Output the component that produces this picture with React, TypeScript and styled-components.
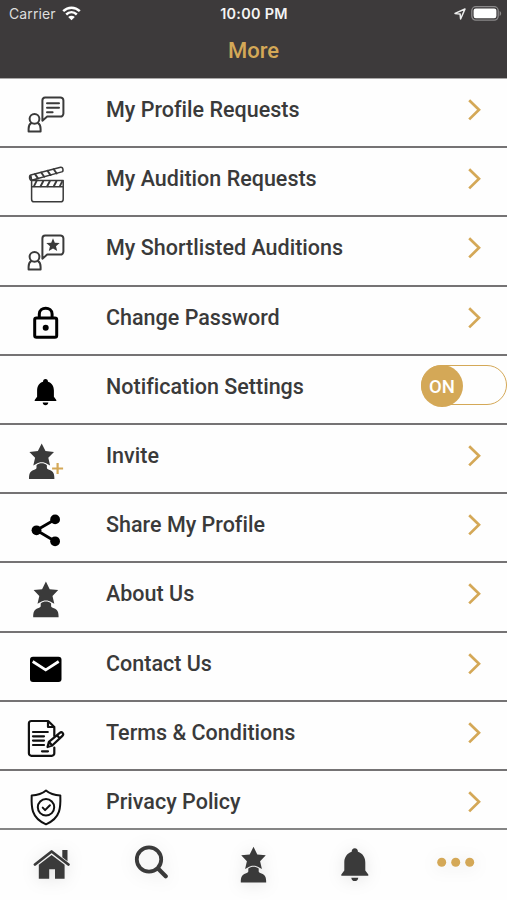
import React from "react";
import styled, { createGlobalStyle } from "styled-components";

const ink = "#3a3a3a";
const gold = "#d4a857";

const GlobalStyle = createGlobalStyle`
  * { box-sizing: border-box; }
  body { margin: 0; background: #fefefe; font-family: Roboto, sans-serif; }
`;

const Screen = styled.div`
  width: 507px;
  height: 900px;
  display: flex;
  flex-direction: column;
  overflow: hidden;
  background: #fefefe;
`;

const Header = styled.header`
  height: 79px;
  flex: none;
  background: #3d3a3b;
  border-bottom: 1px solid #aaa8a8;
`;

const StatusBar = styled.div`
  height: 28px;
  display: grid;
  grid-template-columns: 1fr auto 1fr;
  align-items: center;
  padding: 0 6px 1px 9px;
  color: #f4f4f4;
  font-family: Inter, sans-serif;
  font-size: 14px;
  line-height: 27px;
`;

const Carrier = styled.div`
  display: flex;
  align-items: center;
  gap: 6px;
  color: #dededd;
  letter-spacing: 0.1px;
`;

const Clock = styled.div`
  font-weight: 600;
  font-size: 14.4px;
  letter-spacing: 0.3px;
  margin-right: 2px;
`;

const Indicators = styled.div`
  display: flex;
  align-items: center;
  justify-content: flex-end;
  gap: 5px;
  margin-right: -1px;
`;

const Title = styled.h1`
  margin: 0;
  height: 44px;
  text-align: center;
  color: ${gold};
  font-size: 22px;
  font-weight: 500;
  line-height: 45px;
`;

const List = styled.main`
  flex: 1;
  min-height: 0;
  overflow: hidden;
`;

const Row = styled.div`
  height: 69.2px;
  display: flex;
  border-bottom: 2px solid #757374;
`;

const IconCell = styled.svg`
  width: 80px;
  height: 66px;
  flex: none;
  fill: none;
  stroke-linecap: round;
  stroke-linejoin: round;
`;

const Label = styled.div`
  flex: 1;
  padding-left: 26px;
  color: ${ink};
  font-size: 21.5px;
  font-weight: 500;
  line-height: 61px;
  letter-spacing: 0.01px;
  font-variant-ligatures: none;
  white-space: nowrap;
`;

const Chevron = styled.svg`
  width: 16px;
  height: 24px;
  margin: 19px 25px 0 0;
  flex: none;
  fill: none;
  stroke: ${gold};
  stroke-width: 2.7;
`;

const Toggle = styled.div`
  width: 86px;
  height: 40px;
  margin: 9px 0 0;
  flex: none;
  border: 1.5px solid ${gold};
  border-radius: 20px;
`;

const Knob = styled.div`
  width: 42px;
  height: 42px;
  margin: -1px 0 0 -1px;
  border-radius: 50%;
  background: ${gold};
  color: #fff;
  font-size: 18.5px;
  font-weight: 500;
  line-height: 44px;
  text-align: center;
`;

const TabBar = styled.nav`
  height: 72px;
  flex: none;
  display: grid;
  grid-template-columns: repeat(5, 1fr);
  justify-items: center;
  border-top: 2px solid #858585;
  background: #fefefe;
`;

const TabIcon = styled.svg`
  width: 60px;
  height: 66px;
  fill: none;
  overflow: visible;
  filter: drop-shadow(0 2px 8px rgba(0, 0, 0, 0.1));
`;

const Person = () => (
  <g stroke={ink} strokeWidth="2">
    <circle cx="34.5" cy="39.8" r="4.9" />
    <path d="M31.2 44.2c-2 1.2-2.6 3.3-2.6 5.8v2.4h12V50c0-2.5-.6-4.6-2.6-5.8" />
    <path d="M45.2 18.4h15.2a3 3 0 0 1 3 3v13.2a3 3 0 0 1-3 3H47.2l-4.8 4.1V21.4a3 3 0 0 1 2.8-3z" />
  </g>
);

const starPath = "M0 -12.4 3.8 -4.8 12.3 -3.9 6.6 2 8.4 9.8 5.6 8.2 C2.5 6 -2.5 6 -5.6 8.2L-8.4 9.8 -6.6 2 -12.3 -3.9 -3.8 -4.8Z";
const bustPath = "M0 7.5c1.9 0 3.7.6 5.2 1.9v2.6c0 1 .9 1.6 2.8 2.3 3.6 1.3 4.7 3.4 4.7 9H-12.7c0-5.6 1.1-7.7 4.7-9 1.9-.7 2.8-1.3 2.8-2.3V9.4C-3.7 8.1-1.9 7.5 0 7.5z";
const bellPath = "M0 -13c-1.6 0-2.5 1.1-2.5 2.8C-6.5-9-8.4-5.5-8.4-1.4v6.2L-10.8 8v1h21.6V8L8.4 4.8v-6.2c0-4.1-1.9-7.6-5.9-8.8C2.5-11.9 1.6-13 0-13zM-2.8 10.5h5.6c-.2 1.7-1.2 2.7-2.8 2.7s-2.6-1-2.8-2.7z";

const StarPerson = () => (
  <g fill={ink}>
    <path d={starPath} />
    <path d={bustPath} />
  </g>
);

const icons: Record<string, React.ReactNode> = {
  profile: (
    <>
      <Person />
      <path stroke={ink} strokeWidth="2" d="M47 24.2h12M47 28.7h12M47 33.2h5.6" />
    </>
  ),
  audition: (
    <g stroke={ink} strokeWidth="1.5" transform="translate(0 -0.2)">
      <path d="M30.8 27.2 60.6 19.5c2.4-.6 3.4 3.9 1.1 4.6L31.6 32.4zM30.8 27.2c-2.1.7-1.3 5.6.8 5.2v19c0 1.6.9 2.6 2.5 2.6h26.5c1.6 0 2.6-1 2.6-2.6V32.7H31.5M31.5 39h31.7" />
      <path strokeWidth="1.9" d="m35 26.3 3 4.3M41.2 24.7l3 4.2M47.5 23l3 4.3M53.7 21.4l3 4.3M36.5 33.4l-2.5 5M43.2 33.4l-2.6 5M49.8 33.4l-2.6 5M56.4 33.4l-2.6 5M62 34l-2 4" />
    </g>
  ),
  shortlist: (
    <>
      <Person />
      <path fill={ink} transform="translate(53 28)" d="m0-6.8 1.8 4.5 4.9.3L3 1.2l1.2 4.9L0 3.5l-4.2 2.6L-3 1.2-6.7-2l4.9-.3z" />
    </>
  ),
  lock: (
    <>
      <rect x="34.7" y="31" width="22" height="19.2" rx="1.8" stroke="#000" strokeWidth="3" />
      <path stroke="#000" strokeWidth="3" d="M39.3 30.5v-3.4c0-7.7 12.8-7.7 12.8 0v3.4" />
      <circle cx="45.7" cy="40.8" r="3" fill="#000" />
    </>
  ),
  bell: <path fill="#000" transform="translate(45.5 36)" d={bellPath} />,
  invite: (
    <>
      <g transform="translate(41.7 30.8)"><StarPerson /></g>
      <path stroke={gold} strokeWidth="2.2" strokeLinecap="butt" d="M57.6 38v11M52.1 43.5h11" />
    </>
  ),
  share: (
    <>
      <path stroke="#000" strokeWidth="2.8" d="m55 25.5-18.5 10.8L55 47.3" />
      <g fill="#000"><circle cx="55.1" cy="25.4" r="4.9" /><circle cx="36.5" cy="36.3" r="4.9" /><circle cx="55.1" cy="47.3" r="4.9" /></g>
    </>
  ),
  about: <g transform="translate(45.9 31)"><StarPerson /></g>,
  mail: (
    <>
      <rect x="30" y="23.7" width="31.5" height="25.2" rx="3" fill="#000" />
      <path stroke="#fff" strokeWidth="2.7" strokeLinecap="butt" strokeLinejoin="miter" d="m32.7 28.5 13 8.3 13-8.3" />
    </>
  ),
  terms: (
    <g stroke="#111" strokeWidth="2.2">
      <path d="M54.3 45.5v5.8a2.5 2.5 0 0 1-2.5 2.5H31.4a2.5 2.5 0 0 1-2.5-2.5V21.5a2.5 2.5 0 0 1 2.5-2.5h16.8l6.1 6v9M48 19.3V25h6" />
      <path d="M33 30h14.8M33 34.3h11M33 38.6h11M33 43h11M42 49.3h6" />
      <path d="m47.5 45 1.4-5.2 10.9-9c2.1-1.7 4.6 1.2 2.6 3.1l-10.2 9.6zM57 33.2l2.7 3.1M48.9 39.8l3.3 3.7" />
    </g>
  ),
  privacy: (
    <g stroke="#111" strokeWidth="2">
      <path d="M46 19.5c4 3.4 8.8 4.7 14.3 4.9.4 11 .9 22.6-14.3 28.9-15.2-6.3-14.7-17.9-14.3-28.9 5.5-.2 10.3-1.5 14.3-4.9z" />
      <circle cx="46" cy="36.3" r="8.2" />
      <path d="m42.7 36.6 2.4 2.5 4.8-4.9" />
    </g>
  ),
};

const rows: { icon: string; text: string; toggle?: boolean }[] = [
  { icon: "profile", text: "My Profile Requests" },
  { icon: "audition", text: "My Audition Requests" },
  { icon: "shortlist", text: "My Shortlisted Auditions" },
  { icon: "lock", text: "Change Password" },
  { icon: "bell", text: "Notification Settings", toggle: true },
  { icon: "invite", text: "Invite" },
  { icon: "share", text: "Share My Profile" },
  { icon: "about", text: "About Us" },
  { icon: "mail", text: "Contact Us" },
  { icon: "terms", text: "Terms & Conditions" },
  { icon: "privacy", text: "Privacy Policy" },
];

export default function App() {
  return (
    <Screen>
      <GlobalStyle />
      <Header>
        <StatusBar>
          <Carrier>
            Carrier
            <svg width="19" height="15" viewBox="0 0 19 15" fill="none" stroke="#fff" strokeWidth="2.5">
              <path d="M1.2 5.2c4.8-4.6 11.8-4.6 16.6 0M4.2 8.5c3.1-2.9 7.5-2.9 10.6 0" />
              <path fill="#fff" stroke="none" d="M6.2 10.9c1.9-1.7 4.7-1.7 6.6 0L9.5 14.2z" />
            </svg>
          </Carrier>
          <Clock>10:00 PM</Clock>
          <Indicators>
            <svg width="12" height="12" viewBox="0 0 12 12" fill="none" stroke="#eee" strokeWidth="1.5" strokeLinejoin="round">
              <path d="M1 5.4 11 1 6.6 11 6.1 5.9z" />
            </svg>
            <svg width="31" height="15" viewBox="0 0 31 15">
              <rect x=".8" y=".7" width="26.4" height="13.4" rx="4" fill="none" stroke="#8b898a" strokeWidth="1.3" />
              <rect x="2.6" y="2.5" width="22.8" height="9.8" rx="2.2" fill="#fff" />
              <path d="M28.6 5c2 .7 2 4.3 0 5z" fill="#8b898a" />
            </svg>
          </Indicators>
        </StatusBar>
        <Title>More</Title>
      </Header>
      <List>
        {rows.map((row) => (
          <Row key={row.icon}>
            <IconCell viewBox="0 0 80 66">{icons[row.icon]}</IconCell>
            <Label>{row.text}</Label>
            {row.toggle ? (
              <Toggle><Knob>ON</Knob></Toggle>
            ) : (
              <Chevron viewBox="0 0 16 24"><path d="m3.2 2.2 9.8 9.6-9.8 9.6" /></Chevron>
            )}
          </Row>
        ))}
      </List>
      <TabBar>
        <TabIcon viewBox="0 0 60 66">
          <path stroke={ink} strokeWidth="2.8" strokeLinecap="round" strokeLinejoin="round" d="M14 34.5 30.6 21.5 47.4 34.5" />
          <path fill={ink} d="M41.3 20h5.2v11.2l-5.2-4zM17.8 34.8l12.8-9.9 13 9.9v14H34v-9.5h-5.8v9.5H17.8z" />
        </TabIcon>
        <TabIcon viewBox="0 0 60 66">
          <circle cx="27" cy="29.5" r="12.2" stroke={ink} strokeWidth="3.8" />
          <path stroke={ink} strokeWidth="4.2" strokeLinecap="round" d="m36.5 39 7.2 7.2" />
        </TabIcon>
        <TabIcon viewBox="0 0 60 66">
          <g transform="translate(30.5 29.2)"><StarPerson /></g>
        </TabIcon>
        <TabIcon viewBox="0 0 60 66">
          <path fill={ink} transform="translate(29.8 34.6) scale(1.25)" d={bellPath} />
        </TabIcon>
        <TabIcon viewBox="0 0 60 66">
          <g fill={gold}><circle cx="15.7" cy="32.2" r="4.5" /><circle cx="29.7" cy="32.2" r="4.5" /><circle cx="43.7" cy="32.2" r="4.5" /></g>
        </TabIcon>
      </TabBar>
    </Screen>
  );
}
